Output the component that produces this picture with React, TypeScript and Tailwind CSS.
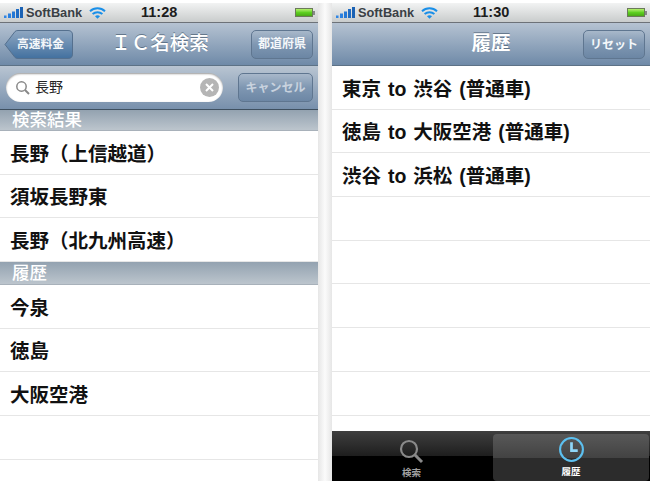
const jp = { fontFamily: '"Liberation Sans","Noto Sans CJK JP",sans-serif' };

function Signal() {
  return (
    <svg width="19" height="11" viewBox="0 0 19 11" className="shrink-0">
      <rect x="0" y="8.5" width="2.5" height="2.5" fill="#2f86e6" />
      <rect x="4" y="6.5" width="3" height="4.5" fill="#2a80e0" />
      <rect x="8" y="4.5" width="3" height="6.5" fill="#2478d6" />
      <rect x="12" y="2" width="3" height="9" fill="#1f6cc4" />
      <rect x="16" y="0" width="3" height="11" fill="#1b62b4" />
    </svg>
  );
}

function Wifi() {
  return (
    <svg width="17" height="12" viewBox="0 0 17 12" className="shrink-0">
      <path d="M1 4.2C5.2 0.4 11.8 0.4 16 4.2" stroke="#1a8fe8" strokeWidth="2" fill="none" />
      <path d="M3.6 6.9C6.4 4.6 10.6 4.6 13.4 6.9" stroke="#1a8fe8" strokeWidth="2" fill="none" />
      <path d="M6 9.2C7.5 8 9.5 8 11 9.2L8.5 11.8Z" fill="#1a8fe8" />
    </svg>
  );
}

function Battery() {
  return (
    <div className="flex items-center">
      <div className="w-[18px] h-[9px] border border-[#6b7a5a] bg-gradient-to-b from-[#b4f06a] via-[#5ed020] to-[#4aa816]" />
      <div className="w-[2px] h-[4px] bg-[#888]" />
    </div>
  );
}

function StatusBar({ time }: { time: string }) {
  return (
    <div className="relative h-[20px] flex items-center pl-[4px] pr-[3px] bg-gradient-to-b from-[#f2f3f3] to-[#c9cccc] border-b border-[#6d7278] shrink-0">
      <Signal />
      <span className="text-[12.8px] font-bold text-[#3a3f45] ml-[3px] w-[63px]" style={jp}>SoftBank</span>
      <Wifi />
      <span className="text-[14.5px] font-bold text-[#1c1c1c] ml-[35px]" style={jp}>{time}</span>
      <div className="ml-auto"><Battery /></div>
    </div>
  );
}

const barBtn = "h-[29px] flex items-center justify-center rounded-[5px] border border-[#5f7690] text-[#f4f7fa] text-[12px] font-bold bg-gradient-to-b from-[#a8b8ca] via-[#7f97b2] to-[#6b86a4]";

function Row({ text }: { text: string }) {
  return (
    <div className="h-[43.7px] shrink-0 flex items-center pl-[10px] pt-[4px] border-b border-[#e6e6e6] text-[19.5px] font-bold [word-spacing:1.5px] text-[#111] bg-white whitespace-pre" style={jp}>
      {text}
    </div>
  );
}

function Section({ text, h }: { text: string; h: string }) {
  return (
    <div className={h + " shrink-0 flex items-center pl-[12px] text-[17.5px] font-medium text-white bg-gradient-to-b from-[#93a2b0] to-[#bcc5cd] border-b border-[#a8b1ba]"} style={jp}>
      {text}
    </div>
  );
}

function Left() {
  return (
    <div className="w-[318px] h-[478px] flex flex-col bg-white overflow-hidden">
      <StatusBar time="11:28" />
      <div className="h-[43px] shrink-0 flex items-center justify-between pl-[4px] pr-[5px] bg-gradient-to-b from-[#b6c3d2] to-[#6f8aa8] border-b border-[#5d7286]">
        <div className="relative w-[69px] h-[29px]">
          <svg width="69" height="29" viewBox="0 0 69 29" className="absolute inset-0">
            <defs>
              <linearGradient id="bk" x1="0" y1="0" x2="0" y2="1">
                <stop offset="0" stopColor="#90a8c2" />
                <stop offset="1" stopColor="#42709f" />
              </linearGradient>
            </defs>
            <path d="M1 14.5L11 1.5Q12 0.5 14 0.5H64Q68.5 0.5 68.5 5V24Q68.5 28.5 64 28.5H14Q12 28.5 11 27.5Z" fill="url(#bk)" stroke="#55708e" />
          </svg>
          <div className="absolute inset-0 pl-[4px] flex items-center justify-center text-[11.75px] font-bold text-[#f4f7fa]" style={jp}>高速料金</div>
        </div>
        <div className="text-[19.5px] font-medium text-white whitespace-pre [text-shadow:0_-1px_0_rgba(60,80,100,0.6)] ml-[-4px]" style={jp}>ＩＣ名検索</div>
        <div className={barBtn + " w-[62px]"} style={jp}>都道府県</div>
      </div>
      <div className="h-[44px] shrink-0 flex items-center pl-[6px] pr-[5px] bg-gradient-to-b from-[#b9c5d2] to-[#7890ac] border-b border-[#3f5060]">
        <div className="w-[217px] h-[29px] rounded-full bg-white flex items-center pl-[9px] pr-[4px] shadow-[inset_0_1px_2px_rgba(0,0,0,0.4)]">
          <svg width="16" height="16" viewBox="0 0 16 16" className="shrink-0">
            <circle cx="6.5" cy="6.5" r="4.7" stroke="#888" strokeWidth="1.5" fill="none" />
            <path d="M10 10L14 14" stroke="#888" strokeWidth="2" />
          </svg>
          <span className="text-[14px] text-[#222] ml-[4px]" style={jp}>長野</span>
          <div className="ml-auto w-[19px] h-[19px] rounded-full bg-[#b5b5b5] flex items-center justify-center">
            <svg width="9" height="9" viewBox="0 0 9 9">
              <path d="M1 1L8 8M8 1L1 8" stroke="#fff" strokeWidth="2" />
            </svg>
          </div>
        </div>
        <div className={barBtn + " w-[75px] ml-auto from-[#8fa3ba] to-[#6d87a5]"} style={jp}>
          <span className="text-[#c8d2de]">キャンセル</span>
        </div>
      </div>
      <Section text="検索結果" h="h-[21px]" />
      <Row text="長野（上信越道）" />
      <Row text="須坂長野東" />
      <Row text="長野（北九州高速）" />
      <Section text="履歴" h="h-[23px]" />
      <Row text="今泉" />
      <Row text="徳島" />
      <Row text="大阪空港" />
      <Row text="" />
      <Row text="" />
    </div>
  );
}

function Right() {
  return (
    <div className="w-[318px] h-[478px] flex flex-col bg-white overflow-hidden">
      <StatusBar time="11:30" />
      <div className="relative h-[43px] shrink-0 flex items-center justify-center bg-gradient-to-b from-[#b6c3d2] to-[#6f8aa8] border-b border-[#5d7286]">
        <div className="text-[19.5px] font-bold text-white [text-shadow:0_-1px_0_rgba(60,80,100,0.6)]" style={jp}>履歴</div>
        <div className={barBtn + " absolute right-[5px] top-[7px] w-[62px]"} style={jp}>リセット</div>
      </div>
      <div className="flex-1 flex flex-col overflow-hidden">
        <Row text="東京 to 渋谷 (普通車)" />
        <Row text="徳島 to 大阪空港 (普通車)" />
        <Row text="渋谷 to 浜松 (普通車)" />
        <Row text="" />
        <Row text="" />
        <Row text="" />
        <Row text="" />
        <Row text="" />
      </div>
      <div className="h-[50px] shrink-0 grid grid-cols-2 gap-[2px] pt-[3px] px-[1px] bg-[linear-gradient(#3f3f3f_0%,#1e1e1e_50%,#000_50%)]">
        <div className="flex flex-col items-center">
          <svg width="26" height="26" viewBox="0 0 26 26" className="mt-[4px] ml-[-2px]">
            <circle cx="11" cy="11" r="8" stroke="#8a8a8a" strokeWidth="2.2" fill="none" />
            <path d="M17 17L24 24" stroke="#8a8a8a" strokeWidth="3" />
          </svg>
          <span className="text-[9.5px] font-bold text-[#a0a0a0] leading-[10px] mt-[4px]" style={jp}>検索</span>
        </div>
        <div className="flex flex-col items-center rounded-[4px] bg-[linear-gradient(#585858_0%,#434343_50%,#2c2c2c_50%)] w-[156px] justify-self-end">
          <svg width="27" height="27" viewBox="0 0 26 26" className="mt-[2px]">
            <circle cx="13" cy="13" r="11" stroke="#5cc0f0" strokeWidth="2" fill="none" />
            <path d="M13 6V14H19" stroke="#8fd6f8" strokeWidth="2.6" fill="none" />
          </svg>
          <span className="text-[9.5px] font-bold text-white leading-[10px] mt-[4px]" style={jp}>履歴</span>
        </div>
      </div>
    </div>
  );
}

export default function App() {
  return (
    <div className="w-[651px] h-[481px] overflow-hidden bg-white flex flex-col">
      <div className="h-[3px] shrink-0" />
      <div className="flex flex-1">
        <Left />
        <div className="w-[14px] h-full bg-[linear-gradient(90deg,#e6e6e6,#fbfbfb_50%,#e6e6e6)]" />
        <Right />
      </div>
    </div>
  );
}
